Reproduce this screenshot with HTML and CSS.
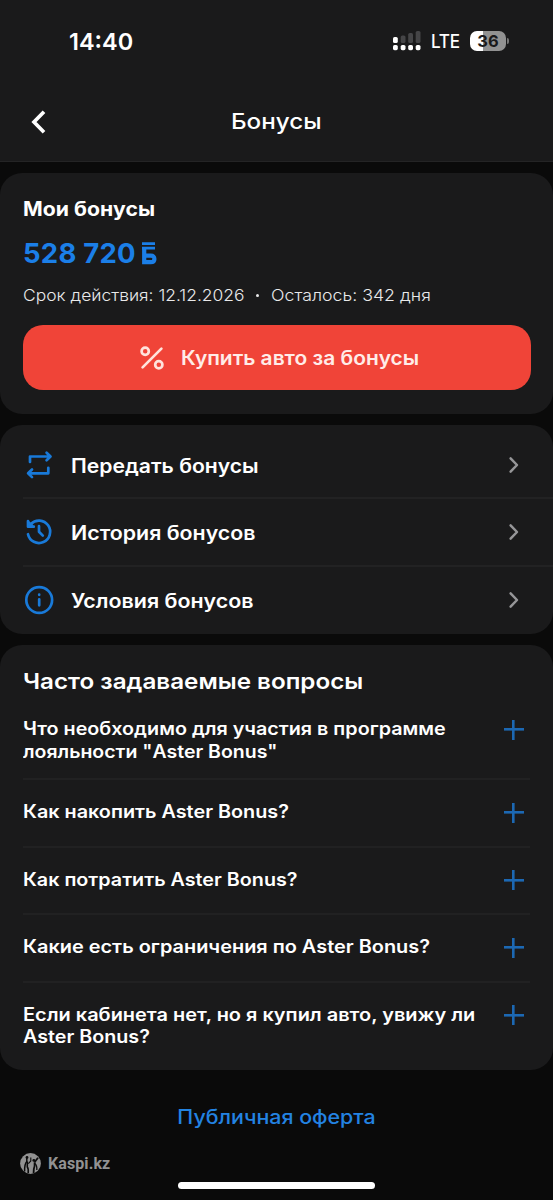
FILE: index.html
```html
<!DOCTYPE html>
<html lang="ru">
<head>
<meta charset="utf-8">
<title>Бонусы</title>
<link rel="stylesheet" href="styles.css">
</head>
<body>
<div class="screen">
  <header class="header">
    <div class="status">
      <span class="time">14:40</span>
      <div class="status-right">
        <svg class="signal" width="28" height="20" viewBox="0 0 28 20">
          <g fill="#454547"><rect x="7.7" y="4.5" width="4.8" height="7.5" rx="1.6"/><rect x="15.2" y="2" width="4.8" height="10" rx="1.6"/><rect x="22.7" y="0" width="4.8" height="12" rx="1.6"/></g>
          <g fill="#fff"><rect x="0" y="6" width="4.8" height="6" rx="1.6"/><rect x="0" y="14" width="4.8" height="5.2" rx="1.6"/><rect x="7.7" y="14" width="4.8" height="5.2" rx="1.6"/><rect x="15.2" y="14" width="4.8" height="5.2" rx="1.6"/><rect x="22.7" y="14" width="4.8" height="5.2" rx="1.6"/></g>
        </svg>
        <span class="lte">LTE</span>
        <span class="battery">36</span><span class="battery-cap"></span>
      </div>
    </div>
    <nav class="nav">
      <svg class="back" width="16" height="24" viewBox="0 0 16 24"><path d="M14 1.8 4 12 14 22.2" fill="none" stroke="#fff" stroke-width="3.7"/></svg>
      <h1 class="title">Бонусы</h1>
      <span class="nav-end"></span>
    </nav>
  </header>

  <main class="content">
    <section class="card balance">
      <h2 class="balance-title wide">Мои бонусы</h2>
      <div class="amount"><span class="sum">528 720</span>
        <svg width="16" height="23" viewBox="0 0 16 23" fill="none" stroke="#1b7fe8"><path d="M1 1.7H14M1 6.2H14" stroke-width="2.8"/><path d="M3.2 7V20.2H9.8Q13.4 20.2 13.4 16.9T9.8 13.6H3.2" stroke-width="4.2"/></svg>
      </div>
      <p class="validity"><span class="until wide">Срок действия: 12.12.2026</span><i class="dot"></i><span class="left wide">Осталось: 342 дня</span></p>
      <div class="buy">
        <svg width="24" height="24" viewBox="0 0 24 24" fill="none" stroke="#ffe3dc" stroke-width="2.7" stroke-linecap="round"><path d="M2.6 21.4 21.4 2.6"/><circle cx="5.2" cy="5.2" r="3.6"/><circle cx="18.8" cy="18.8" r="3.6"/></svg>
        <span class="buy-text wide">Купить авто за бонусы</span>
      </div>
    </section>

    <section class="card menu">
      <div class="item top">
        <svg class="icon" width="30" height="30" viewBox="0 0 30 30"><path d="M6 12V6.5H26M22.6 2.7 26.5 6.5 22.6 10.3M24.3 17.8V23.3H4.5M8 19.5 4.1 23.3 8 27.1"/></svg>
        <span class="label"><span class="wide l1">Передать бонусы</span></span>
        <svg class="chev" width="12" height="18" viewBox="0 0 12 18"><path d="M2.6 2.4 9 9 2.6 15.6"/></svg>
      </div>
      <div class="item lined">
        <svg class="icon" width="30" height="30" viewBox="0 0 30 30"><path d="M4 17.2A11.2 11.2 0 1 0 6.8 7.1L4.3 9.5M4 4V9.7H9.8M4.3 5 8.5 9.2M15 9.2V14.8L18.8 18.6"/></svg>
        <span class="label"><span class="wide l2">История бонусов</span></span>
        <svg class="chev" width="12" height="18" viewBox="0 0 12 18"><path d="M2.6 2.4 9 9 2.6 15.6"/></svg>
      </div>
      <div class="item lined">
        <svg class="icon" width="30" height="30" viewBox="0 0 30 30"><circle cx="15.2" cy="15" r="12.9"/><path d="M15.2 14.3V20.3M15.2 9.7V9.8"/></svg>
        <span class="label"><span class="wide l3">Условия бонусов</span></span>
        <svg class="chev" width="12" height="18" viewBox="0 0 12 18"><path d="M2.6 2.4 9 9 2.6 15.6"/></svg>
      </div>
    </section>

    <section class="card faq">
      <h2 class="faq-title wide">Часто задаваемые вопросы</h2>
      <div class="q first"><p><span class="wide q1">Что необходимо для участия в программе</span><br><span class="wide q1b">лояльности "Aster Bonus"</span></p><i class="plus"></i></div>
      <div class="q"><p><span class="wide q2">Как накопить Aster Bonus?</span></p><i class="plus"></i></div>
      <div class="q"><p><span class="wide q3">Как потратить Aster Bonus?</span></p><i class="plus"></i></div>
      <div class="q"><p><span class="wide q4">Какие есть ограничения по Aster Bonus?</span></p><i class="plus"></i></div>
      <div class="q last"><p><span class="wide q5">Если кабинета нет, но я купил авто, увижу ли</span><br><span class="wide q5b">Aster Bonus?</span></p><i class="plus"></i></div>
    </section>
  </main>

  <footer class="footer">
    <a class="offer">Публичная оферта</a>
    <div class="brand">
      <svg width="21" height="21" viewBox="0 0 21 21"><circle cx="10.5" cy="10.5" r="10.4" fill="#929292"/><g fill="none" stroke="#0b0b0b"><path d="M6.8 4V8.5Q4.4 11 4.6 18.4" stroke-width="1.5"/><path d="M7.3 8.5V14Q8.6 15.5 8.2 20" stroke-width="1.6"/><path d="M10.8 4.6V8L8.3 10.6" stroke-width="1.1"/><path d="M18 4.8 14.6 9.2" stroke-width="1.8"/><path d="M14.6 9.2V13Q13.4 16 13.6 20" stroke-width="1.8"/><path d="M14.8 10.4Q17.3 12.5 16.8 17" stroke-width="1.3"/></g><circle cx="7" cy="4.4" r="1.4" fill="#0b0b0b"/><circle cx="13.8" cy="7.4" r="1.4" fill="#0b0b0b"/></svg>
      <span class="brand-name">Kaspi.kz</span>
    </div>
    <div class="home"></div>
  </footer>
</div>
</body>
</html>
```

FILE: styles.css
```css
* { box-sizing: border-box; }
body { margin: 0; background: #0a0a0a; color: #fff; font-family: Inter, "Noto Sans", sans-serif; }
h1, h2, p { margin: 0; }
svg { display: block; flex: none; }
span, h1, h2 { white-space: nowrap; }
.screen { width: 553px; height: 1200px; display: flex; flex-direction: column; overflow: hidden; }

/* Headings and labels use slightly extended letterforms */
.wide { display: inline-block; transform: scaleX(var(--w, 1.1)); transform-origin: left center; }

.header { height: 162px; background: #1a1a1b; border-bottom: 1px solid #242425; }
.status { height: 82px; padding: 0 44px 0 69px; display: flex; align-items: center; justify-content: space-between; }
.time { font-size: 23.5px; font-weight: 600; }
.status-right { display: flex; align-items: center; }
.lte { margin-left: 10px; width: 28px; font-size: 19px; font-weight: 500; letter-spacing: -0.3px; transform: scaleX(0.9); transform-origin: left center; }
.battery { margin-left: 11px; width: 36px; height: 20px; border-radius: 7px; background: linear-gradient(90deg, #fff 36%, #929292 36%); color: #1a1a1b; font-size: 16.5px; font-weight: 700; line-height: 20px; text-align: center; }
.battery-cap { margin-left: 1px; width: 2px; height: 6px; border-radius: 0 2px 2px 0; background: #777; }
.nav { height: 79px; padding: 0 30px; display: flex; align-items: center; justify-content: space-between; }
.nav-end { width: 16px; }
.title { font-size: 22px; font-weight: 500; line-height: 28px; padding-bottom: 2px; transform: scaleX(1.1); }

.content { padding-top: 11px; display: flex; flex-direction: column; gap: 11px; }
.card { background: #1a1a1b; border-radius: 22px; }
.balance { height: 241px; padding: 23px 23px 0; }
.balance-title { --w: 1.087; font-size: 19.5px; font-weight: 650; line-height: 26px; vertical-align: top; }
.amount { margin-top: 13px; height: 36px; display: flex; align-items: center; gap: 6px; color: #1b7fe8; }
.sum { width: 112px; font-size: 27.5px; font-weight: 700; letter-spacing: 0.25px; }
.validity { margin-top: 12px; height: 24px; display: flex; align-items: center; font-size: 16.5px; font-weight: 300; color: #e9e9ea; }
.until { --w: 1.057; width: 221px; }
.left { --w: 1.075; }
.dot { width: 3px; height: 3px; border-radius: 2px; background: #e9e9ea; margin: 0 12px 0 12px; }
.buy { margin-top: 18px; height: 65px; width: 508px; border-radius: 20px; background: #f04438; color: #ffece8; display: flex; align-items: center; padding-left: 117px; gap: 17px; }
.buy-text { --w: 1.073; font-size: 19.5px; font-weight: 600; padding-top: 1px; }

.menu { height: 209px; padding-top: 8px; }
.item { height: 68px; margin-left: 23px; padding: 0 33px 0 1px; display: flex; align-items: center; }
.item.top { height: 63.5px; }
.item.lined { border-top: 2px solid #222223; }
.icon { fill: none; stroke: #197ad9; stroke-width: 2.7; stroke-linecap: round; stroke-linejoin: round; }
.label { margin-left: 17px; padding-top: 2px; flex: 1; font-size: 19.5px; font-weight: 600; }
.l1 { --w: 1.084; }
.l2 { --w: 1.095; }
.l3 { --w: 1.098; }
.chev path { fill: none; stroke: #969698; stroke-width: 2.5; stroke-linecap: round; stroke-linejoin: round; }

.faq { height: 425px; padding: 20px 23px 0; }
.faq-title { font-size: 22px; font-weight: 600; line-height: 32px; vertical-align: top; }
.q { height: 67.6px; border-top: 2px solid #212122; padding: 21px 7px 0 0; display: flex; justify-content: space-between; font-size: 18px; font-weight: 600; line-height: 22.5px; }
.q.first { height: 81px; border: 0; padding-top: 21px; }
.q1 { --w: 1.097; }
.q1b { --w: 1.083; }
.q2 { --w: 1.1; }
.q3 { --w: 1.096; }
.q4 { --w: 1.106; }
.q5 { --w: 1.108; }
.q5b { --w: 1.095; }
.plus { width: 20px; height: 20px; margin: 1.5px -0.5px 0 0; flex: none; background: linear-gradient(#1c68b3, #1c68b3) center / 20px 2.6px no-repeat, linear-gradient(#1c68b3, #1c68b3) center / 2.6px 20px no-repeat; }

.footer { flex: 1; display: flex; flex-direction: column; }
.offer { margin-top: 33px; height: 28px; line-height: 28px; text-align: center; font-size: 19.5px; font-weight: 500; transform: scaleX(1.097); color: #2383e2; }
.brand { margin: 22px 0 0 20px; height: 21px; display: flex; align-items: center; gap: 7px; color: #929292; }
.brand-name { font-family: Roboto, sans-serif; font-size: 16px; font-weight: 700; letter-spacing: 0.1px; }
.home { margin: 8px auto 0; width: 197px; height: 7px; border-radius: 4px; background: #fff; }
```
